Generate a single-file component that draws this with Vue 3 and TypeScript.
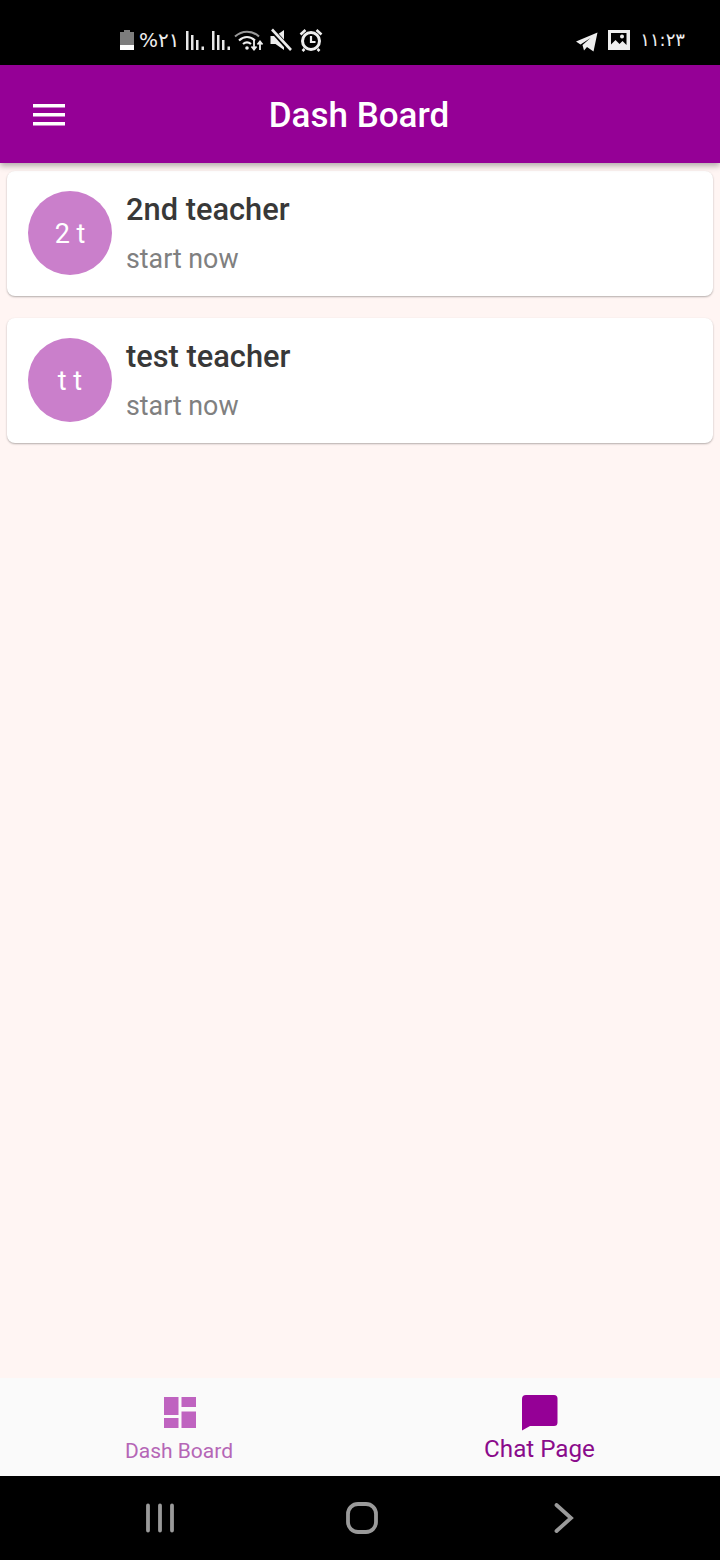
<template>
  <div class="page">
    <div class="status-bar">
      <div class="status-group">
        <svg class="battery" width="16" height="22" viewBox="0 0 16 22">
          <path d="M5 1h6v2h4v18H1V3h4z" fill="#7d7d7d" />
          <rect x="1" y="16" width="14" height="5" fill="#fff" />
        </svg>
        <span class="percent">%۲۱</span>
        <svg v-for="n in 2" :key="n" class="signal" width="22" height="22" viewBox="0 0 22 22">
          <path d="M1 2h2.500v19H1zM6 6h2.500v15H6zM11 11h2.500v10H11zM16.500 17.500H19V21h-2.500z" fill="#e8e8e8" />
        </svg>
        <svg class="wifi" width="30" height="24" viewBox="0 0 30 24" fill="none" stroke="#eee">
          <path d="M1 8.500C8 2 18 2 25 8.500" stroke-width="2" stroke="#999" />
          <path d="M5 12.500c5-4.500 11-4.500 16 0" stroke-width="2.200" />
          <path d="M9 16c3-2.500 5-2.500 8 0" stroke-width="2.200" />
          <circle cx="13" cy="20" r="1.800" fill="#eee" stroke="none" />
          <path d="M20 12v9M17.500 18.500l2.500 3 2.500-3M26 22v-8M23.500 16.500l2.500-3 2.500 3" stroke-width="1.800" />
        </svg>
        <svg class="mute" width="24" height="24" viewBox="0 0 24 24">
          <path d="M1.500 8h5L15 2v20l-8.500-6h-5z" fill="#eee" />
          <path d="M3 2l18 20" stroke="#000" stroke-width="5" />
          <path d="M3 1.500l19 20.500" stroke="#eee" stroke-width="2.600" />
        </svg>
        <svg class="alarm" width="24" height="24" viewBox="0 0 24 24" fill="none">
          <circle cx="12" cy="13" r="8.500" stroke="#eee" stroke-width="3" />
          <path d="M12 8v6h4.500" stroke="#eee" stroke-width="2.200" />
          <path d="M1.500 6.500L6.500 2M22.500 6.500L17.500 2M5.500 21l-2 2M18.500 21l2 2" stroke="#eee" stroke-width="2.600" />
        </svg>
      </div>
      <div class="status-group right">
        <svg class="telegram" width="24" height="22" viewBox="0 0 24 22">
          <path d="M2 10.500L23.500 1.500 19.500 20.500 13 16 10 19.500 8.500 14 16.500 7 6.500 13.500z" fill="#eee" />
        </svg>
        <svg width="22" height="20" viewBox="0 0 22 20">
          <path fill-rule="evenodd" d="M0 0h22v20H0zM3 3v11.500l4.500-4.500 4 4 3-3 4 4V3zM14 4.500a2 2 0 1 1 0 4 2 2 0 0 1 0-4z" fill="#eee" />
        </svg>
        <span class="clock">۱۱:۲۳</span>
      </div>
    </div>

    <header class="app-bar">
      <svg class="menu" width="32" height="24" viewBox="0 0 32 24">
        <path d="M0 1h32v3.500H0zM0 10h32v3.500H0zM0 19h32v3.500H0z" fill="#fff" />
      </svg>
      <h1 class="title">Dash Board</h1>
    </header>

    <main class="list">
      <div v-for="t in teachers" :key="t.name" class="card">
        <div class="avatar">{{ t.initials }}</div>
        <div class="info">
          <div class="name">{{ t.name }}</div>
          <div class="sub">start now</div>
        </div>
      </div>
    </main>

    <nav class="bottom-nav">
      <div class="tab">
        <svg width="32" height="31" viewBox="0 0 32 31">
          <path d="M0 0h14.500v18H0zM17.500 0H32v10H17.500zM17.500 14.500H32V31H17.500zM0 21h14.500v10H0z" fill="#bf63c0" />
        </svg>
        <span class="tab-label">Dash Board</span>
      </div>
      <div class="tab active">
        <svg width="36" height="36" viewBox="0 0 36 36">
          <path d="M4 0h28a3.500 3.500 0 0 1 3.500 3.500v24a3.500 3.500 0 0 1-3.500 3.500H8l-8 4.500V4a4 4 0 0 1 4-4z" fill="#950096" />
        </svg>
        <span class="tab-label">Chat Page</span>
      </div>
    </nav>

    <div class="system-nav">
      <svg width="30" height="30" viewBox="0 0 30 30">
        <path d="M3 2.500v25M15 2.500v25M27 2.500v25" stroke="#9a9a9a" stroke-width="3.800" stroke-linecap="round" />
      </svg>
      <svg width="32" height="32" viewBox="0 0 32 32">
        <rect x="2" y="2" width="28" height="28" rx="10" fill="none" stroke="#9a9a9a" stroke-width="3.800" />
      </svg>
      <svg class="back" width="20" height="30" viewBox="0 0 20 30">
        <path d="M2.500 2l14.500 13L2.500 28" fill="none" stroke="#9a9a9a" stroke-width="3.800" stroke-linecap="round" />
      </svg>
    </div>
  </div>
</template>

<script setup lang="ts">
interface Teacher {
  name: string
  initials: string
}

const teachers: Teacher[] = [
  { name: '2nd teacher', initials: '2 t' },
  { name: 'test teacher', initials: 't t' },
]
</script>

<style scoped>
.page {
  width: 720px;
  height: 1560px;
  display: flex;
  flex-direction: column;
  background: #fff5f3;
  font-family: Roboto, "Noto Sans", sans-serif;
}

.status-bar {
  height: 65px;
  flex-shrink: 0;
  background: #000;
  color: #eee;
  display: flex;
  justify-content: space-between;
  align-items: center;
  padding: 15px 35px 0 119px;
  box-sizing: border-box;
}

.status-group {
  display: flex;
  align-items: center;
  gap: 4px;
}

.status-group.right {
  gap: 10px;
}

.percent,
.clock {
  font-family: "DejaVu Sans", sans-serif;
  font-size: 20px;
  line-height: 24px;
}

.percent {
  margin-right: 1px;
}

.wifi {
  margin-left: -3px;
  margin-right: 1px;
}

.alarm {
  margin-left: 2px;
}

.telegram {
  margin-top: 3px;
}

.clock {
  font-size: 18px;
}

.app-bar {
  height: 98px;
  flex-shrink: 0;
  background: #950096;
  box-shadow: 0 3px 6px rgba(0, 0, 0, 0.3);
  position: relative;
  z-index: 1;
  display: flex;
  align-items: center;
  justify-content: center;
}

.menu {
  position: absolute;
  left: 33px;
  top: 38px;
}

.title {
  margin: 2px 2px 0 0;
  color: #fff;
  font-size: 35px;
  font-weight: 500;
}

.list {
  flex: 1;
  display: flex;
  flex-direction: column;
  gap: 22px;
  padding: 8px 7px 0;
}

.card {
  height: 125px;
  box-sizing: border-box;
  background: #fff;
  border-radius: 8px;
  box-shadow: 0 1px 2px rgba(0, 0, 0, 0.3);
  display: flex;
  align-items: center;
  gap: 14px;
  padding: 0 21px;
}

.avatar {
  width: 84px;
  height: 84px;
  margin-bottom: 2px;
  padding-top: 2px;
  box-sizing: border-box;
  border-radius: 50%;
  background: #ca7fcb;
  color: #fff;
  font-size: 27px;
  display: flex;
  align-items: center;
  justify-content: center;
}

.info {
  display: flex;
  flex-direction: column;
  gap: 14px;
  padding-top: 1px;
}

.name {
  color: #383838;
  font-size: 30.800px;
  font-weight: 500;
  line-height: 36px;
}

.sub {
  color: #808080;
  font-size: 26.800px;
  line-height: 34px;
}

.bottom-nav {
  height: 98px;
  flex-shrink: 0;
  background: #fafafa;
  display: flex;
}

.tab {
  flex: 1;
  display: flex;
  flex-direction: column;
  align-items: center;
  padding-top: 19px;
  box-sizing: border-box;
  color: #b566b6;
  font-size: 21px;
}

.tab-label {
  line-height: 26px;
  margin-top: 10px;
  margin-right: 2px;
}

.tab.active {
  color: #8a0a8b;
  font-size: 24.200px;
  padding-top: 17px;
}

.tab.active .tab-label {
  line-height: 28px;
  margin-top: 4px;
  margin-right: 1px;
}

.system-nav {
  height: 84px;
  flex-shrink: 0;
  background: #000;
  display: flex;
  align-items: center;
  gap: 171px;
  padding: 0 145px;
}

.back {
  margin-left: 5px;
}
</style>
